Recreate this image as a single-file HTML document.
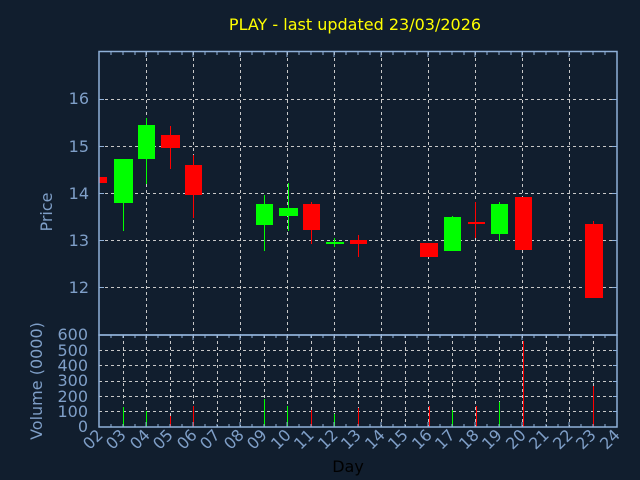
<!DOCTYPE html>
<html><head><meta charset="utf-8"><style>
html,body{margin:0;padding:0;background:#111e2e;}
svg{display:block;font-family:"DejaVu Sans","Liberation Sans",sans-serif;}
</style></head><body>
<svg width="640" height="480" viewBox="0 0 640 480" xmlns="http://www.w3.org/2000/svg">
<rect width="640" height="480" fill="#111e2e"/>
<text x="355" y="30" fill="#ffff00" font-size="16" text-anchor="middle">PLAY - last updated 23/03/2026</text>
<g stroke="#c8c8c8" stroke-dasharray="3,3" stroke-width="1">
<line x1="99" y1="99.5" x2="617" y2="99.5"/>
<line x1="99" y1="146.5" x2="617" y2="146.5"/>
<line x1="99" y1="193.5" x2="617" y2="193.5"/>
<line x1="99" y1="240.5" x2="617" y2="240.5"/>
<line x1="99" y1="287.5" x2="617" y2="287.5"/>
<line x1="99" y1="350.5" x2="617" y2="350.5"/>
<line x1="99" y1="365.5" x2="617" y2="365.5"/>
<line x1="99" y1="381.5" x2="617" y2="381.5"/>
<line x1="99" y1="396.5" x2="617" y2="396.5"/>
<line x1="99" y1="411.5" x2="617" y2="411.5"/>
<path d="M146.5 52V335M193.5 52V335M240.5 52V335M287.5 52V335M334.5 52V335M381.5 52V335M428.5 52V335M475.5 52V335M522.5 52V335M569.5 52V335"/>
<path d="M123.5 335V427M146.5 335V427M170.5 335V427M193.5 335V427M217.5 335V427M240.5 335V427M264.5 335V427M287.5 335V427M311.5 335V427M334.5 335V427M358.5 335V427M381.5 335V427M405.5 335V427M428.5 335V427M452.5 335V427M475.5 335V427M499.5 335V427M522.5 335V427M546.5 335V427M569.5 335V427M593.5 335V427"/>
</g>
<g>
<rect x="99" y="177" width="8" height="6" fill="#ff0000"/>
<line x1="123.5" y1="159" x2="123.5" y2="231" stroke="#00ff00"/>
<rect x="114" y="159" width="19" height="44" fill="#00ff00"/>
<line x1="146.5" y1="118" x2="146.5" y2="184" stroke="#00ff00"/>
<rect x="138" y="125" width="17" height="34" fill="#00ff00"/>
<line x1="170.5" y1="126" x2="170.5" y2="169" stroke="#ff0000"/>
<rect x="161" y="135" width="19" height="13" fill="#ff0000"/>
<line x1="193.5" y1="155" x2="193.5" y2="218" stroke="#ff0000"/>
<rect x="185" y="165" width="17" height="30" fill="#ff0000"/>
<line x1="264.5" y1="195" x2="264.5" y2="251" stroke="#00ff00"/>
<rect x="256" y="204" width="17" height="21" fill="#00ff00"/>
<line x1="288.5" y1="183" x2="288.5" y2="231" stroke="#00ff00"/>
<rect x="279" y="208" width="19" height="8" fill="#00ff00"/>
<line x1="311.5" y1="202" x2="311.5" y2="244" stroke="#ff0000"/>
<rect x="303" y="204" width="17" height="26" fill="#ff0000"/>
<line x1="334.5" y1="238" x2="334.5" y2="247" stroke="#00ff00"/>
<rect x="326" y="242" width="18" height="2" fill="#00ff00"/>
<line x1="358.5" y1="235" x2="358.5" y2="257" stroke="#ff0000"/>
<rect x="350" y="240" width="17" height="4" fill="#ff0000"/>
<rect x="420" y="243" width="18" height="14" fill="#ff0000"/>
<line x1="452.5" y1="216" x2="452.5" y2="251" stroke="#00ff00"/>
<rect x="444" y="217" width="17" height="34" fill="#00ff00"/>
<line x1="475.5" y1="202" x2="475.5" y2="238" stroke="#ff0000"/>
<rect x="468" y="222" width="17" height="2" fill="#ff0000"/>
<line x1="499.5" y1="202" x2="499.5" y2="241" stroke="#00ff00"/>
<rect x="491" y="204" width="17" height="30" fill="#00ff00"/>
<rect x="515" y="197" width="17" height="53" fill="#ff0000"/>
<line x1="593.5" y1="221" x2="593.5" y2="298" stroke="#ff0000"/>
<rect x="585" y="224" width="18" height="74" fill="#ff0000"/>
</g>
<g stroke-width="1">
<line x1="123.5" y1="407" x2="123.5" y2="427" stroke="#00ff00"/>
<line x1="146.5" y1="411" x2="146.5" y2="427" stroke="#00ff00"/>
<line x1="170.5" y1="416" x2="170.5" y2="427" stroke="#ff0000"/>
<line x1="193.5" y1="406" x2="193.5" y2="427" stroke="#ff0000"/>
<line x1="264.5" y1="399" x2="264.5" y2="427" stroke="#00ff00"/>
<line x1="287.5" y1="406" x2="287.5" y2="427" stroke="#00ff00"/>
<line x1="311.5" y1="410" x2="311.5" y2="427" stroke="#ff0000"/>
<line x1="334.5" y1="414" x2="334.5" y2="427" stroke="#00ff00"/>
<line x1="358.5" y1="408" x2="358.5" y2="427" stroke="#ff0000"/>
<line x1="429.5" y1="406" x2="429.5" y2="427" stroke="#ff0000"/>
<line x1="452.5" y1="410" x2="452.5" y2="427" stroke="#00ff00"/>
<line x1="476.5" y1="406" x2="476.5" y2="427" stroke="#ff0000"/>
<line x1="499.5" y1="402" x2="499.5" y2="427" stroke="#00ff00"/>
<line x1="523.5" y1="341" x2="523.5" y2="427" stroke="#ff0000"/>
<line x1="593.5" y1="386" x2="593.5" y2="427" stroke="#ff0000"/>
</g>
<g stroke="#8fb0d8" fill="none" stroke-width="1.5">
<rect x="99" y="51.5" width="518" height="283.5"/>
<rect x="99" y="335" width="518" height="92"/>
</g>
<g stroke="#8fb0d8" stroke-width="1">
<path d="M111 52v3M123 52v3M135 52v3M146 52v5M158 52v3M170 52v3M182 52v3M193 52v5M205 52v3M217 52v3M229 52v3M240 52v5M252 52v3M264 52v3M276 52v3M287 52v5M299 52v3M311 52v3M323 52v3M334 52v5M346 52v3M358 52v3M370 52v3M381 52v5M393 52v3M405 52v3M417 52v3M428 52v5M440 52v3M452 52v3M464 52v3M475 52v5M487 52v3M499 52v3M511 52v3M522 52v5M534 52v3M546 52v3M558 52v3M569 52v5M581 52v3M593 52v3M605 52v3"/>
<path d="M111 335v3M123 335v3M135 335v3M146 335v5M158 335v3M170 335v3M182 335v3M193 335v5M205 335v3M217 335v3M229 335v3M240 335v5M252 335v3M264 335v3M276 335v3M287 335v5M299 335v3M311 335v3M323 335v3M334 335v5M346 335v3M358 335v3M370 335v3M381 335v5M393 335v3M405 335v3M417 335v3M428 335v5M440 335v3M452 335v3M464 335v3M475 335v5M487 335v3M499 335v3M511 335v3M522 335v5M534 335v3M546 335v3M558 335v3M569 335v5M581 335v3M593 335v3M605 335v3"/>
<path d="M111 427v-3M123 427v-3M135 427v-3M146 427v-5M158 427v-3M170 427v-3M182 427v-3M193 427v-5M205 427v-3M217 427v-3M229 427v-3M240 427v-5M252 427v-3M264 427v-3M276 427v-3M287 427v-5M299 427v-3M311 427v-3M323 427v-3M334 427v-5M346 427v-3M358 427v-3M370 427v-3M381 427v-5M393 427v-3M405 427v-3M417 427v-3M428 427v-5M440 427v-3M452 427v-3M464 427v-3M475 427v-5M487 427v-3M499 427v-3M511 427v-3M522 427v-5M534 427v-3M546 427v-3M558 427v-3M569 427v-5M581 427v-3M593 427v-3M605 427v-3"/>
<path d="M99 99.5h5M99 146.5h5M99 193.5h5M99 240.5h5M99 287.5h5M617 99.5h-5M617 146.5h-5M617 193.5h-5M617 240.5h-5M617 287.5h-5M617 350.5h-4M617 365.5h-4M617 381.5h-4M617 396.5h-4M617 411.5h-4"/>
</g>
<g fill="#7f9fc8" font-size="16" text-anchor="end">
<text x="89" y="104">16</text>
<text x="89" y="152">15</text>
<text x="89" y="199">14</text>
<text x="89" y="246">13</text>
<text x="89" y="293">12</text>
<text x="88" y="340">600</text>
<text x="88" y="356">500</text>
<text x="88" y="371">400</text>
<text x="88" y="386">300</text>
<text x="88" y="402">200</text>
<text x="88" y="417">100</text>
<text x="88" y="432">0</text>
</g>
<text transform="translate(52,212) rotate(-90)" fill="#7f9fc8" font-size="16" text-anchor="middle">Price</text>
<text transform="translate(42,381) rotate(-90)" fill="#7f9fc8" font-size="16" text-anchor="middle">Volume (0000)</text>
<g fill="#7f9fc8" font-size="16" text-anchor="end">
<text transform="translate(104,436) rotate(-45)">02</text>
<text transform="translate(127,436) rotate(-45)">03</text>
<text transform="translate(151,436) rotate(-45)">04</text>
<text transform="translate(174,436) rotate(-45)">05</text>
<text transform="translate(198,436) rotate(-45)">06</text>
<text transform="translate(221,436) rotate(-45)">07</text>
<text transform="translate(245,436) rotate(-45)">08</text>
<text transform="translate(268,436) rotate(-45)">09</text>
<text transform="translate(292,436) rotate(-45)">10</text>
<text transform="translate(315,436) rotate(-45)">11</text>
<text transform="translate(339,436) rotate(-45)">12</text>
<text transform="translate(362,436) rotate(-45)">13</text>
<text transform="translate(386,436) rotate(-45)">14</text>
<text transform="translate(409,436) rotate(-45)">15</text>
<text transform="translate(433,436) rotate(-45)">16</text>
<text transform="translate(456,436) rotate(-45)">17</text>
<text transform="translate(480,436) rotate(-45)">18</text>
<text transform="translate(503,436) rotate(-45)">19</text>
<text transform="translate(527,436) rotate(-45)">20</text>
<text transform="translate(550,436) rotate(-45)">21</text>
<text transform="translate(574,436) rotate(-45)">22</text>
<text transform="translate(597,436) rotate(-45)">23</text>
<text transform="translate(621,436) rotate(-45)">24</text>
</g>
<text x="348" y="472" fill="#000000" font-size="16" text-anchor="middle">Day</text>
</svg>
</body></html>
